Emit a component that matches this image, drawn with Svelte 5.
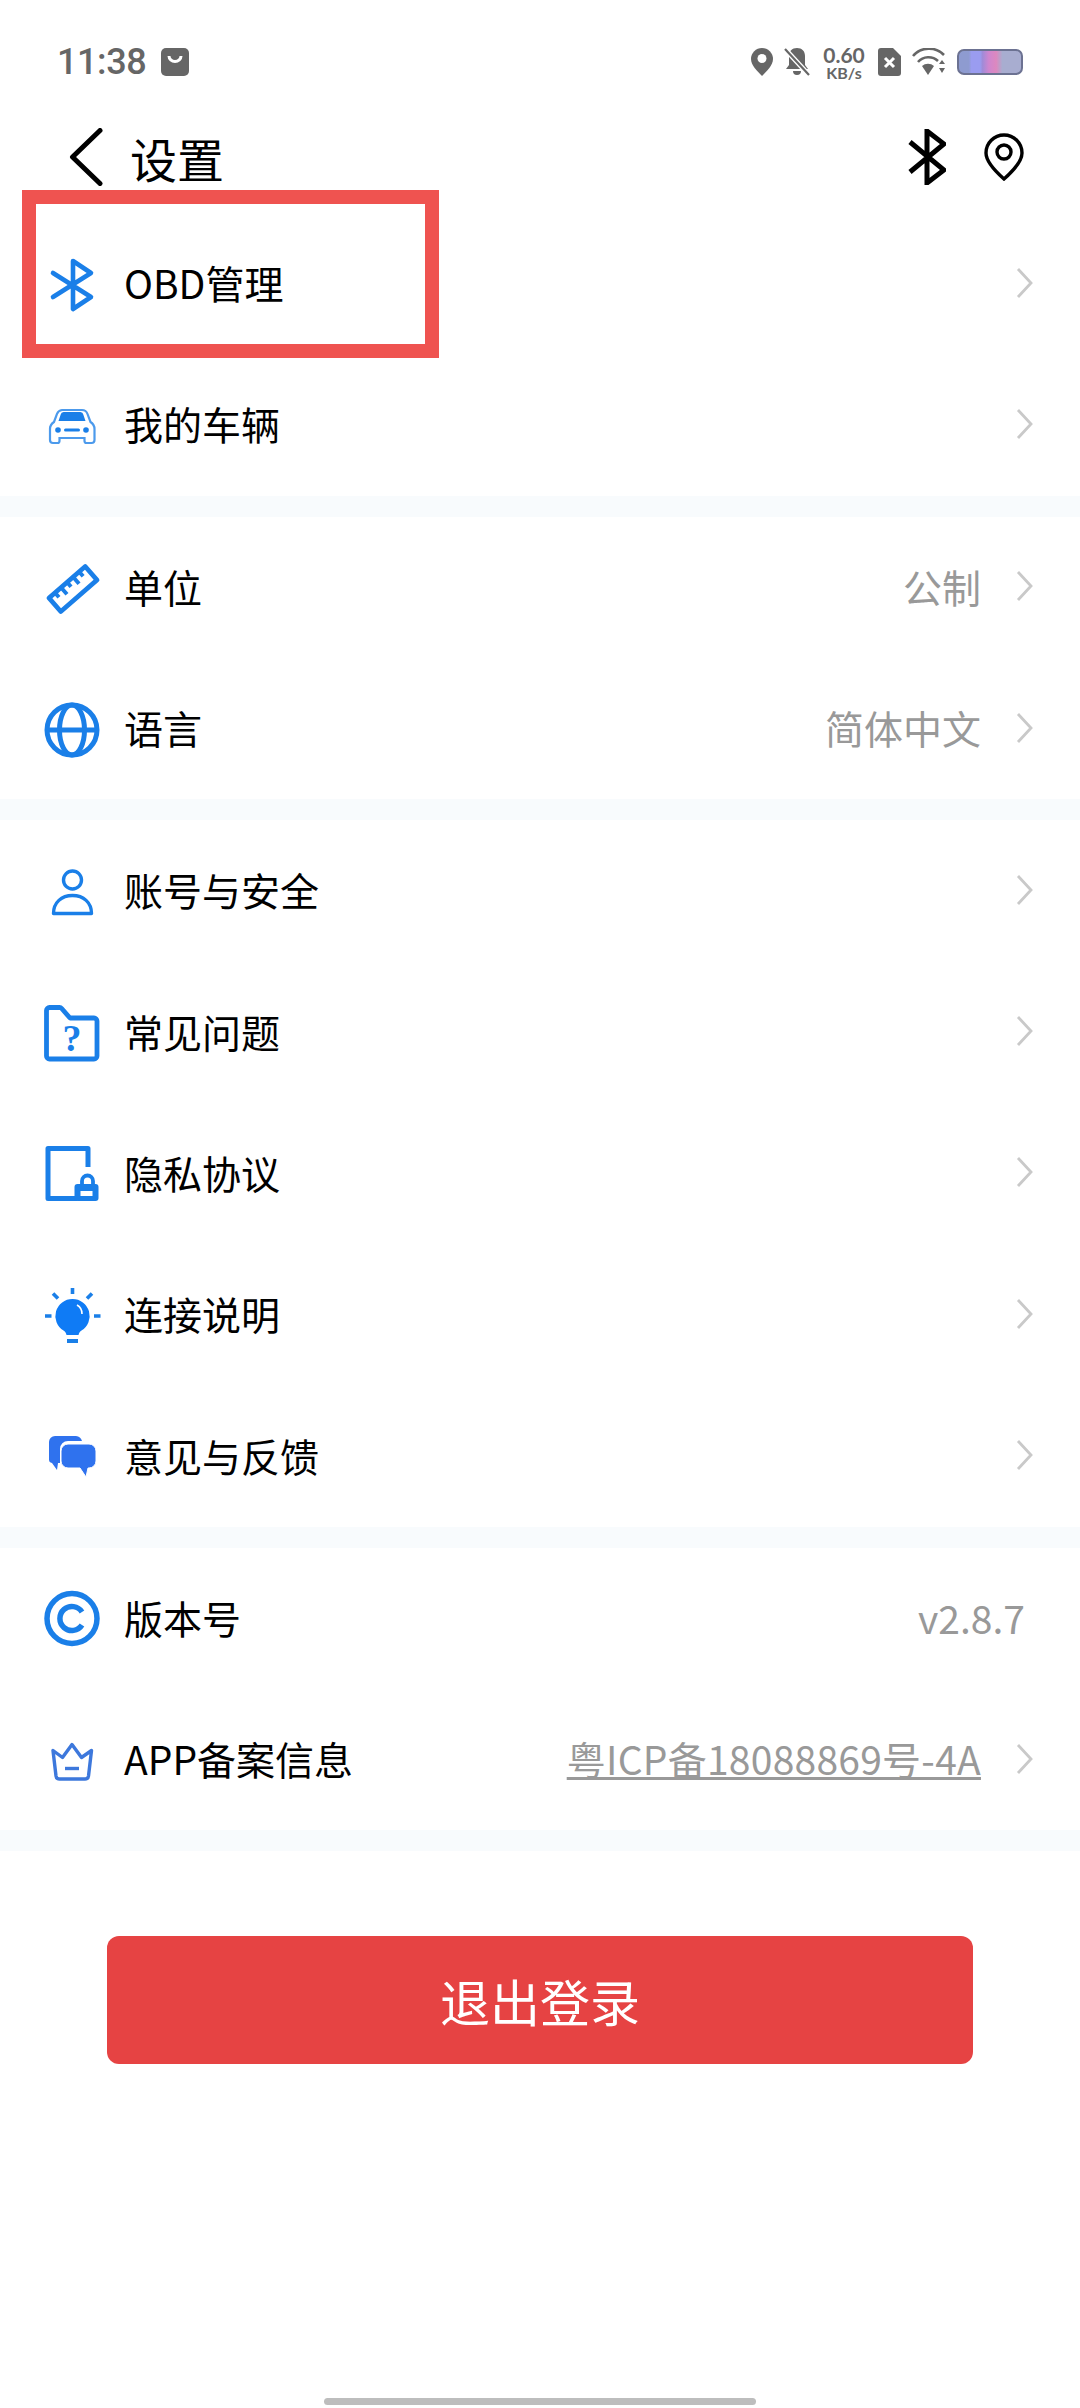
<script lang="ts">
	const blue = '#1a7fe8';

	const icons: Record<string, string> = {
		bluetooth: `<path d="M9 14 47 38 29 50V2L47 14 9 38" fill="none" stroke="${blue}" stroke-width="4.6" stroke-linejoin="round" stroke-linecap="round"/>`,
		car: `<path d="M18 10h20a6 6 0 0 1 5.500 4l3 8c3 2 4 4 4 7v11a3 3 0 0 1-3 3h-5a2 2 0 0 1-2-2v-3H15.500v3a2 2 0 0 1-2 2H9a3 3 0 0 1-3-3V29c0-3 1-5 4-7l3-8a6 6 0 0 1 5-4z" fill="none" stroke="#4c9aec" stroke-width="2.200"/><path d="M14.500 21l2.200-6.500a3 3 0 0 1 3-2.500h16.600a3 3 0 0 1 3 2.500l2.200 6.500z" fill="${blue}"/><circle cx="14" cy="30" r="2.800" fill="${blue}"/><circle cx="42" cy="30" r="2.800" fill="${blue}"/><rect x="20" y="28.500" width="16" height="3" rx="1.500" fill="${blue}"/>`,
		ruler: `<g transform="rotate(-41 29 27)" fill="none" stroke="${blue}" stroke-width="4.800" stroke-linejoin="round"><rect x="5" y="18" width="48" height="18"/><path d="M13 18v6M21 18v9M29 18v6M37 18v9M45 18v6" stroke-width="4"/></g>`,
		globe: `<g fill="none" stroke="${blue}" stroke-width="5"><circle cx="28" cy="26" r="25"/><ellipse cx="28" cy="26" rx="12.500" ry="25"/><path d="M3 26h50"/></g>`,
		user: `<g fill="none" stroke="${blue}" stroke-width="3.400" stroke-linejoin="round"><circle cx="28.500" cy="14" r="9"/><path d="M9.500 47.500c0-11 8-18 19-18s19 7 19 18z"/></g>`,
		folder: `<path d="M5.500 0.500h10a3 3 0 0 1 2.200 1l8.300 9.500h24a3 3 0 0 1 3 3v35a3 3 0 0 1-3 3H5.500a3 3 0 0 1-3-3v-45.500a3 3 0 0 1 3-3z" fill="none" stroke="${blue}" stroke-width="4.800" stroke-linejoin="round"/><text x="28" y="44" text-anchor="middle" font-family="'Liberation Serif', serif" font-weight="700" font-size="38" fill="${blue}">?</text>`,
		privacy: `<path d="M44 19V0.500H4V50.500H33" fill="none" stroke="${blue}" stroke-width="5" stroke-linejoin="round"/><path d="M38 37v-4a5.500 5.500 0 0 1 11 0v4" fill="none" stroke="${blue}" stroke-width="3.800"/><rect x="30.500" y="36" width="24" height="17" rx="3" fill="${blue}"/><rect x="36.500" y="43" width="12" height="5" fill="#fff"/>`,
		bulb: `<path d="M28.500 9a17 17 0 0 1 9 31.500c-1.500 1-2.500 2-3 4.500h-12c-.5-2.500-1.500-3.500-3-4.500a17 17 0 0 1 9-31.500z" fill="#0f7bf5"/><rect x="23" y="49" width="11" height="4" fill="${blue}"/><path d="M28.500-2V4M9 3.500l5 5M48 3.500l-5 5M1 26h6.500M50 26h6.500" stroke="${blue}" stroke-width="3.600" fill="none"/><path d="M33 15a10 10 0 0 1 5 9" stroke="#fff" stroke-width="1.600" fill="none"/>`,
		chat: `<path d="M11 5h21a7 7 0 0 1 6 5H24a8 8 0 0 0-8 8v14h-2l-1 7-5-7a3.500 3.500 0 0 1-3-3.500V11a6 6 0 0 1 6-6z" fill="#2f72ee"/><path d="M24 13h21a7 7 0 0 1 7 7v10a7 7 0 0 1-7 7h-1l-2 9-6-9H24a7 7 0 0 1-7-7V20a7 7 0 0 1 7-7z" fill="#2f72ee" stroke="#fff" stroke-width="1"/>`,
		version: `<circle cx="28" cy="25.500" r="25" fill="none" stroke="${blue}" stroke-width="5.500"/><path d="M38 19a12 12 0 1 0 0 13" fill="none" stroke="${blue}" stroke-width="5.500"/>`,
		crown: `<path d="M9 15.500l9.500 7 9.500-13 9.500 13 10-7-3 25.500a3.500 3.500 0 0 1-3.500 3H15.500a3.500 3.500 0 0 1-3.500-3z" fill="none" stroke="#3d78dc" stroke-width="3.400" stroke-linejoin="round"/><path d="M21 33.500h14" stroke="#3d78dc" stroke-width="3.400"/>`
	};

	type Row = { icon: string; label: string; value?: string; link?: boolean; noArrow?: boolean };

	const groups: Row[][] = [
		[
			{ icon: 'bluetooth', label: 'OBD管理' },
			{ icon: 'car', label: '我的车辆' }
		],
		[
			{ icon: 'ruler', label: '单位', value: '公制' },
			{ icon: 'globe', label: '语言', value: '简体中文' }
		],
		[
			{ icon: 'user', label: '账号与安全' },
			{ icon: 'folder', label: '常见问题' },
			{ icon: 'privacy', label: '隐私协议' },
			{ icon: 'bulb', label: '连接说明' },
			{ icon: 'chat', label: '意见与反馈' }
		],
		[
			{ icon: 'version', label: '版本号', value: 'v2.8.7', noArrow: true },
			{ icon: 'crown', label: 'APP备案信息', value: '粤ICP备18088869号-4A', link: true }
		]
	];
</script>

<div class="page">
	<div class="status">
		<span class="time">11:38</span>
		<svg class="bag" width="28" height="28" viewBox="0 0 28 28">
			<rect width="28" height="28" rx="5" fill="#666" />
			<path d="M8 8a6 5.500 0 0 0 12 0" fill="none" stroke="#fff" stroke-width="3" />
		</svg>
		<div class="status-right">
			<svg width="22" height="28" viewBox="0 0 22 28">
				<path d="M11 0a11 11 0 0 1 11 11c0 6-6 12-11 17C6 23 0 17 0 11A11 11 0 0 1 11 0z" fill="#666" />
				<circle cx="11" cy="10.500" r="4.500" fill="#fff" />
			</svg>
			<svg class="bell" width="26" height="28" viewBox="0 0 26 28">
				<path d="M13 0c5 0 8 3 8 8v9l3 4H2l3-4V8c0-5 3-8 8-8zM9 23h8a4 4 0 0 1-8 0z" fill="#666" />
				<path d="M1 1l24 26" stroke="#fff" stroke-width="5" />
				<path d="M1 1l24 26" stroke="#666" stroke-width="2.200" />
			</svg>
			<div class="speed"><span class="num">0.60</span><span class="unit">KB/s</span></div>
			<svg width="23" height="28" viewBox="0 0 23 28">
				<path d="M3 0h12l8 8v17a3 3 0 0 1-3 3H3a3 3 0 0 1-3-3V3a3 3 0 0 1 3-3z" fill="#666" />
				<path d="M7 10l9 9M16 10l-9 9" stroke="#fff" stroke-width="3" />
			</svg>
			<svg width="34" height="28" viewBox="0 0 34 28">
				<g fill="none" stroke="#666" stroke-width="2.600">
					<path d="M1 8a21 21 0 0 1 31-1" />
					<path d="M6 14a14 14 0 0 1 20-1" />
				</g>
				<path d="M10 18a9 9 0 0 1 12 0l-6 9z" fill="#666" />
				<path d="M27 16l3-4 3 4zM27 20h6l-3 5z" fill="#666" />
			</svg>
			<div class="battery"></div>
		</div>
	</div>

	<header class="nav">
		<svg class="back" width="34" height="58" viewBox="0 0 34 58">
			<path d="M31 2.500 3.500 29 31 55.500" fill="none" stroke="#000" stroke-width="5" stroke-linecap="round" stroke-linejoin="round" />
		</svg>
		<span class="title">设置</span>
		<div class="nav-right">
			<svg width="38" height="56" viewBox="0 0 38 56">
				<path d="M2 13 36 41 19 54V2L36 15 2 43" fill="none" stroke="#000" stroke-width="5" />
			</svg>
			<svg width="40" height="48" viewBox="0 0 40 48">
				<path d="M20 2a18 18 0 0 1 18 18c0 9-9 18-18 26C11 38 2 29 2 20A18 18 0 0 1 20 2z" fill="none" stroke="#000" stroke-width="3.400" />
				<circle cx="20" cy="19" r="7" fill="none" stroke="#000" stroke-width="3.400" />
			</svg>
		</div>
	</header>

	{#each groups as group}
		<section class="group">
			{#each group as row}
				<div class="row">
					<svg class="icon" width="56" height="56" viewBox="0 0 56 56">{@html icons[row.icon]}</svg>
					<span class="label">{row.label}</span>
					{#if row.value}
						<span class="value" class:link={row.link} class:flush={row.noArrow}>{row.value}</span>
					{/if}
					{#if !row.noArrow}
						<svg class="arrow" width="17" height="32" viewBox="0 0 17 32">
							<path d="M2 2l13 14L2 30" fill="none" stroke="#c9c9c9" stroke-width="2.800" />
						</svg>
					{/if}
				</div>
			{/each}
		</section>
	{/each}

	<button class="logout">退出登录</button>

	<div class="home-bar"></div>

	<div class="highlight"></div>
</div>

<style>
	:global(body) {
		background: #fff;
	}
	.page {
		position: relative;
		width: 1080px;
		height: 2408px;
		display: flex;
		flex-direction: column;
		background: #fff;
		font-family: 'Noto Sans CJK SC', 'Noto Sans', sans-serif;
		overflow: hidden;
	}
	.status {
		height: 124px;
		display: flex;
		align-items: center;
		padding: 0 57px 0 57px;
		box-sizing: border-box;
		color: #666;
	}
	.time {
		font-family: Roboto, sans-serif;
		font-size: 36px;
		font-weight: 500;
		letter-spacing: -0.4px;
	}
	.bag {
		margin-left: 15px;
	}
	.status-right {
		margin-left: auto;
		display: flex;
		align-items: center;
		gap: 11px;
	}
	.speed {
		display: flex;
		flex-direction: column;
		align-items: center;
		font-family: Lato, sans-serif;
		font-weight: 700;
		line-height: 1;
		width: 46px;
	}
	.num {
		font-size: 21px;
	}
	.unit {
		font-size: 16px;
	}
	.battery {
		width: 66px;
		height: 26px;
		box-sizing: border-box;
		border: 2px solid #6c7292;
		border-radius: 7px;
		background: linear-gradient(90deg, #8e9bd0 0 16%, #9a9cf0 20% 34%, #a08bd8 38%, #cf86cf 48%, #dd88bf 60%, #a8add0 70% 100%);
	}
	.nav {
		height: 89px;
		box-sizing: border-box;
		padding: 0 56px 23px 69px;
		display: flex;
		align-items: center;
	}
	.title {
		margin-left: 27px;
		font-size: 47px;
		color: #000;
	}
	.nav-right {
		margin-left: auto;
		display: flex;
		align-items: center;
		gap: 38px;
	}
	.group {
		border-bottom: 21px solid #f8fbfd;
	}
	.row {
		height: 141.3px;
		display: flex;
		align-items: center;
		padding: 0 47px 0 44px;
	}
	.icon {
		flex: none;
		overflow: visible;
		margin-top: 6px;
	}
	.label {
		margin-left: 24px;
		padding-bottom: 3px;
		font-size: 39px;
		color: #000;
	}
	.value {
		margin-left: auto;
		padding-bottom: 3px;
		font-size: 39px;
		color: #999;
	}
	.value.flush {
		margin-right: 8px;
	}
	.value.link {
		text-decoration: underline;
		letter-spacing: 0.25px;
	}
	.arrow {
		flex: none;
		margin-left: 35px;
		margin-bottom: 2px;
	}
	.row > .label + .arrow {
		margin-left: auto;
	}
	.logout {
		align-self: center;
		margin-top: 85px;
		width: 866px;
		height: 128px;
		border: none;
		border-radius: 12px;
		background: #e64343;
		color: #fff;
		font-family: inherit;
		font-size: 50px;
	}
	.home-bar {
		margin-top: auto;
		margin-bottom: 3px;
		align-self: center;
		width: 432px;
		height: 7px;
		border-radius: 4px;
		background: #bdbdbd;
	}
	/* annotation drawn over the first row */
	.highlight {
		position: absolute;
		left: 22px;
		top: 190px;
		width: 417px;
		height: 168px;
		box-sizing: border-box;
		border: 14px solid #ef5350;
	}
</style>
